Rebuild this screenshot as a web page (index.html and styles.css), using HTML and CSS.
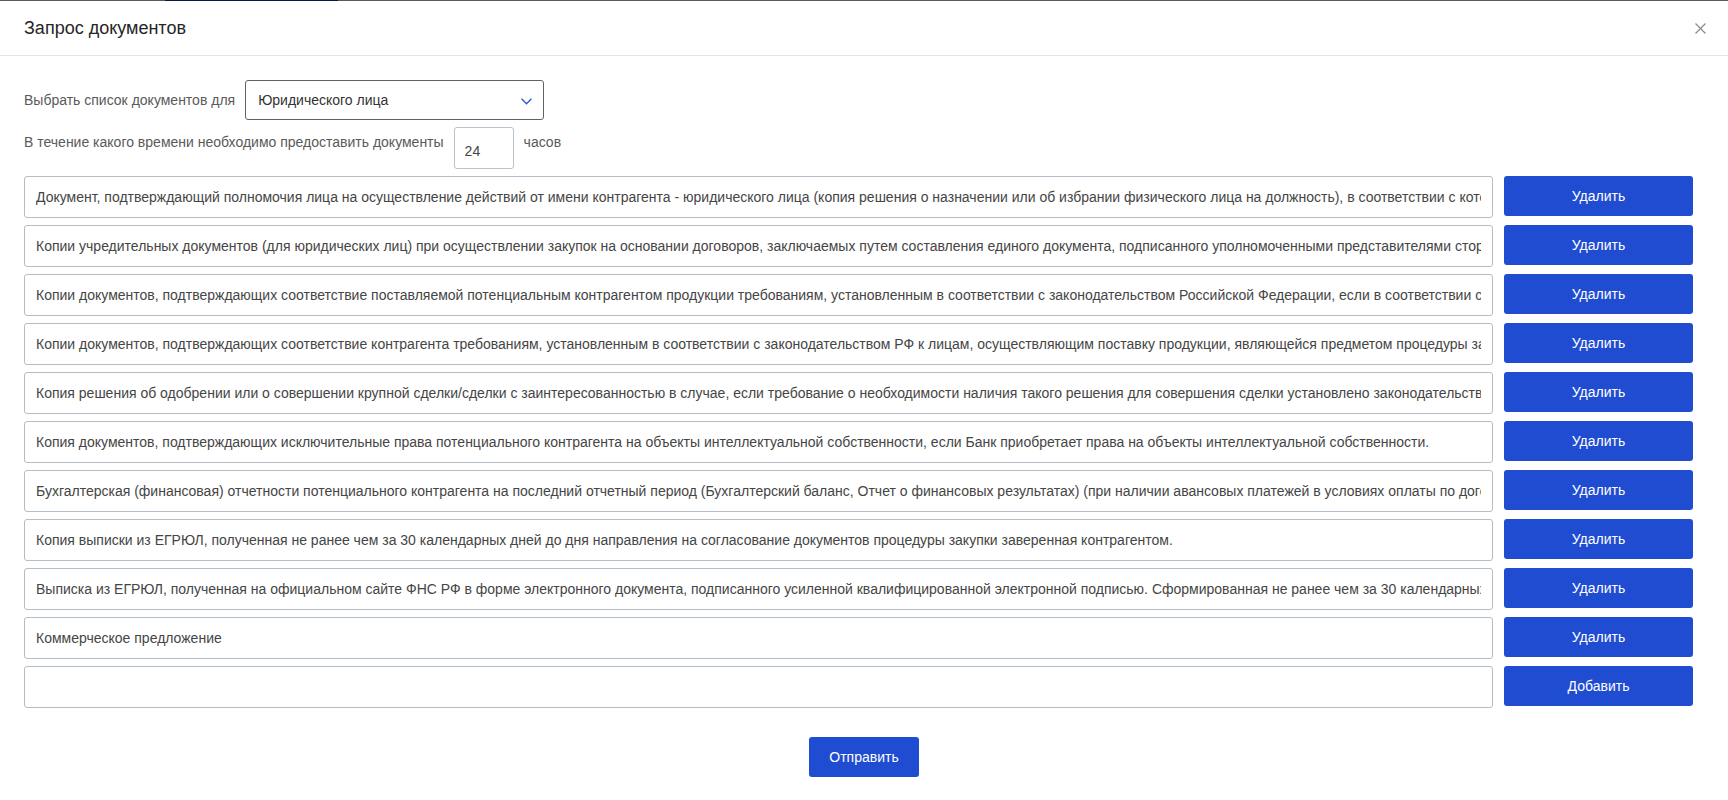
FILE: index.html
```html
<!DOCTYPE html>
<html lang="ru">
<head>
<meta charset="utf-8">
<title>Запрос документов</title>
<link rel="stylesheet" href="styles.css">
</head>
<body>
<div class="backdrop-edge"></div>
<div class="modal">
  <div class="modal-header">
    <div class="modal-title">Запрос документов</div>
    <button class="close" aria-label="Закрыть">
      <svg width="11" height="11" viewBox="0 0 11 11"><path d="M0.5 0.5 L10.5 10.5 M10.5 0.5 L0.5 10.5" stroke="#8a8a8a" stroke-width="1.2" fill="none"/></svg>
    </button>
  </div>
  <div class="modal-body">
    <div class="field-row">
      <span class="label">Выбрать список документов для</span>
      <div class="select">
        <span>Юридического лица</span>
        <svg width="11" height="7" viewBox="0 0 11 7"><path d="M0.6 0.8 L5.5 5.8 L10.4 0.8" stroke="#2c55d4" stroke-width="1.3" fill="none"/></svg>
      </div>
    </div>
    <div class="field-row time-row">
      <span class="label label-top">В течение какого времени необходимо предоставить документы</span>
      <input class="hours" type="text" value="24">
      <span class="label label-top">часов</span>
    </div>
    <div class="doc-list">
      <div class="doc-row"><input class="doc-input" type="text" value="Документ, подтверждающий полномочия лица на осуществление действий от имени контрагента - юридического лица (копия решения о назначении или об избрании физического лица на должность), в соответствии с которым такое физическое лицо обладает правом действовать от имени контрагента без доверенности"><button class="btn btn-row">Удалить</button></div>
      <div class="doc-row"><input class="doc-input" type="text" value="Копии учредительных документов (для юридических лиц) при осуществлении закупок на основании договоров, заключаемых путем составления единого документа, подписанного уполномоченными представителями сторон"><button class="btn btn-row">Удалить</button></div>
      <div class="doc-row"><input class="doc-input" type="text" value="Копии документов, подтверждающих соответствие поставляемой потенциальным контрагентом продукции требованиям, установленным в соответствии с законодательством Российской Федерации, если в соответствии с законодательством"><button class="btn btn-row">Удалить</button></div>
      <div class="doc-row"><input class="doc-input" type="text" value="Копии документов, подтверждающих соответствие контрагента требованиям, установленным в соответствии с законодательством РФ к лицам, осуществляющим поставку продукции, являющейся предметом процедуры закупки"><button class="btn btn-row">Удалить</button></div>
      <div class="doc-row"><input class="doc-input" type="text" value="Копия решения об одобрении или о совершении крупной сделки/сделки с заинтересованностью в случае, если требование о необходимости наличия такого решения для совершения сделки установлено законодательством"><button class="btn btn-row">Удалить</button></div>
      <div class="doc-row"><input class="doc-input" type="text" value="Копия документов, подтверждающих исключительные права потенциального контрагента на объекты интеллектуальной собственности, если Банк приобретает права на объекты интеллектуальной собственности."><button class="btn btn-row">Удалить</button></div>
      <div class="doc-row"><input class="doc-input" type="text" value="Бухгалтерская (финансовая) отчетности потенциального контрагента на последний отчетный период (Бухгалтерский баланс, Отчет о финансовых результатах) (при наличии авансовых платежей в условиях оплаты по договору)"><button class="btn btn-row">Удалить</button></div>
      <div class="doc-row"><input class="doc-input" type="text" value="Копия выписки из ЕГРЮЛ, полученная не ранее чем за 30 календарных дней до дня направления на согласование документов процедуры закупки заверенная контрагентом."><button class="btn btn-row">Удалить</button></div>
      <div class="doc-row"><input class="doc-input" type="text" value="Выписка из ЕГРЮЛ, полученная на официальном сайте ФНС РФ в форме электронного документа, подписанного усиленной квалифицированной электронной подписью. Сформированная не ранее чем за 30 календарных дней"><button class="btn btn-row">Удалить</button></div>
      <div class="doc-row"><input class="doc-input" type="text" value="Коммерческое предложение"><button class="btn btn-row">Удалить</button></div>
      <div class="doc-row"><input class="doc-input" type="text" value=""><button class="btn btn-row">Добавить</button></div>
    </div>
  </div>
  <div class="modal-footer">
    <button class="btn btn-submit">Отправить</button>
  </div>
</div>
</body>
</html>
```

FILE: styles.css
```css
* { box-sizing: border-box; }
html, body {
  margin: 0;
  padding: 0;
  background: #ffffff;
  font-family: "Liberation Sans", Arial, sans-serif;
}
.backdrop-edge {
  height: 1px;
  background: linear-gradient(to right, #5a5a5a 0, #5a5a5a 165px, #0b1a45 165px, #0b1a45 338px, #5a5a5a 338px, #5a5a5a 100%);
}
.modal {
  background: #fff;
}
.modal-header {
  height: 55px;
  display: flex;
  align-items: center;
  justify-content: space-between;
  padding: 1px 22px 0 24px;
  border-bottom: 1px solid #e4e4e4;
}
.modal-title {
  font-size: 18px;
  color: #262626;
}
.close {
  border: 0;
  background: transparent;
  padding: 0;
  width: 11px;
  height: 11px;
  display: flex;
  cursor: pointer;
}
.modal-body {
  padding: 24px 35px 0 24px;
}
.field-row {
  display: flex;
  align-items: center;
  gap: 10px;
}
.label {
  font-size: 14px;
  line-height: 16px;
  color: #5a5a5a;
}
.select {
  width: 299px;
  height: 40px;
  border: 1px solid #5f6368;
  border-radius: 3px;
  display: flex;
  align-items: center;
  justify-content: space-between;
  padding: 0 11px 0 12px;
  font-size: 14px;
  color: #333;
}
.select svg { margin-top: 2px; }
.time-row {
  margin-top: 7px;
  align-items: flex-start;
  gap: 10px;
}
.label-top {
  padding-top: 7px;
}
.hours {
  width: 60px;
  height: 42px;
  border: 1px solid #b9c1cc;
  border-radius: 3px;
  padding: 5px 10px 0;
  font: inherit;
  font-size: 14px;
  color: #444;
  outline: none;
}
.doc-list {
  margin-top: 7px;
  display: flex;
  flex-direction: column;
  gap: 7px;
}
.doc-row {
  display: flex;
  align-items: flex-start;
  gap: 11px;
}
.doc-input {
  flex: 1;
  min-width: 0;
  height: 42px;
  border: 1px solid #b5bdc8;
  border-radius: 3px;
  padding: 0 11px;
  font: inherit;
  font-size: 14px;
  color: #454545;
  outline: none;
  background: #fff;
}
.btn {
  border: 0;
  border-radius: 3px;
  background: #204cd2;
  color: #fff;
  font-family: inherit;
  font-size: 14px;
  cursor: pointer;
}
.btn-row {
  width: 189px;
  height: 40px;
  flex: none;
}
.modal-footer {
  display: flex;
  justify-content: center;
  padding: 29px 0 24px;
}
.btn-submit {
  width: 110px;
  height: 40px;
}
```
